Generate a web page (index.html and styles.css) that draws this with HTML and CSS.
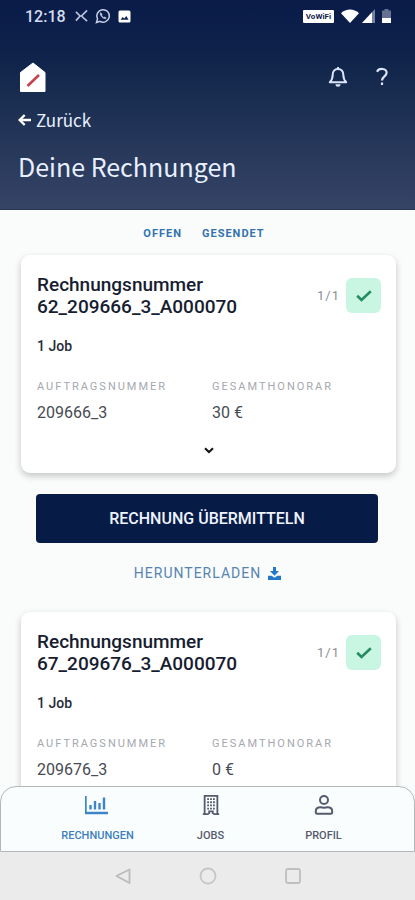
FILE: index.html
```html
<!DOCTYPE html>
<html lang="de">
<head>
<meta charset="utf-8">
<meta name="viewport" content="width=device-width, initial-scale=1">
<title>Deine Rechnungen</title>
<link rel="stylesheet" href="styles.css">
</head>
<body>
<header class="header">
  <div class="status">
    <div class="status-group">
      <span class="clock">12:18</span>
      <svg width="13" height="14" viewBox="0 0 14 14" fill="none" stroke="#b9c3de" stroke-width="1.800"><path d="M1 2.500 5.500 7 1 12M13 1 7 7l6 5.500M5.500 7h2"/></svg>
      <svg width="16" height="16" viewBox="0 0 16 16" fill="none" stroke="#c5cfe6" stroke-width="1.500"><path d="M1.500 14.500l1-3.600a6.300 6.300 0 1 1 2.400 2.500z"/><path d="M5.600 4.600c-1 1.200 0 3.300 1.500 4.700 1.500 1.300 3.200 2 4.200.8l-1.500-1.200-1 .7C7.700 9 7 8.200 6.600 7.200l.6-.9z" fill="#d5dcf0" stroke-width=".5"/></svg>
      <svg width="13" height="13" viewBox="0 0 13 13"><rect x=".5" y=".5" width="12" height="12" rx="1.500" fill="#fff"/><path d="M2.500 9.800 4.700 7l1.500 1.600L8.300 6l2.300 3.800z" fill="#14234d"/></svg>
    </div>
    <div class="status-group status-right">
      <span class="vowifi">VoWiFi</span>
      <svg width="18" height="14" viewBox="0 0 18 14"><path d="M0 4.200C5-.7 13-.7 18 4.200L9 14z" fill="#fff"/></svg>
      <svg class="signal" width="13" height="14" viewBox="0 0 13 14"><path d="M13 0v14H0z" fill="#7481a3"/><path d="M10 3.200V14H0z" fill="#fff"/></svg>
      <svg width="9" height="14" viewBox="0 0 9 14"><path d="M2.500 0h4v1.500H9V14H0V1.500h2.500z" fill="#65718f"/><path d="M0 9h9v5H0z" fill="#fff"/></svg>
    </div>
  </div>
  <div class="toolbar">
    <a href="#" class="icon-link" aria-label="Startseite"><svg width="28" height="30" viewBox="0 0 28 30"><path d="M15 1 27 10.500V29.500H2.500V10.500z" fill="#fff" stroke="#fff" stroke-linejoin="round"/><path d="M9.500 24 21 13" stroke="#c8414f" stroke-width="2.600"/></svg></a>
    <div class="actions">
      <button class="icon-btn" aria-label="Benachrichtigungen"><svg width="20" height="22" viewBox="0 0 20 22" fill="none" stroke="#dce5fb" stroke-width="2" stroke-linejoin="round"><path d="M10 1v2M10 3C6.500 3 4.700 5.600 4.700 8.700c0 4.100-1 5.600-2.900 7.600h16.400c-1.900-2-2.900-3.500-2.900-7.600C15.300 5.600 13.500 3 10 3z"/><path d="M7.500 18.200h5a2.500 2.500 0 0 1-5 0z" fill="#dce5fb" stroke="none"/></svg></button>
      <button class="icon-btn" aria-label="Hilfe"><svg width="14" height="20" viewBox="0 0 14 20" fill="none" stroke="#dce5fb" stroke-width="2.200"><path d="M2 4.700C3.800.8 11.600 1 11.600 5.800c0 3.700-4.600 3.600-4.600 7.800"/><path d="M7 15.500v2.500"/></svg></button>
    </div>
  </div>
  <a href="#" class="back"><svg width="13" height="12" viewBox="0 0 13 12" fill="none" stroke="#fff" stroke-width="2.400"><path d="M6.700 1 1.700 6l5 5M2 6h11"/></svg>Zurück</a>
  <h1>Deine Rechnungen</h1>
</header>

<main class="content">
  <nav class="tabs"><a href="#">OFFEN</a><a href="#">GESENDET</a></nav>
  <article class="card">
    <div class="card-head">
      <h2>Rechnungsnummer<br>62_209666_3_A000070</h2>
      <div class="progress">1/1<span class="check"><svg width="16" height="12" viewBox="0 0 16 12" fill="none" stroke="#268b63" stroke-width="2.600"><path d="M1.200 5.800 5.500 10 14.800 1.200"/></svg></span></div>
    </div>
    <p class="jobs">1 Job</p>
    <dl class="facts">
      <div><dt>AUFTRAGSNUMMER</dt><dd>209666_3</dd></div>
      <div><dt>GESAMTHONORAR</dt><dd>30 €</dd></div>
    </dl>
    <button class="expand" aria-label="Details anzeigen"><svg width="10" height="7" viewBox="0 0 10 7" fill="none" stroke="#111" stroke-width="2"><path d="M1 1.200 5 5l4-3.800"/></svg></button>
  </article>
  <button class="submit">RECHNUNG ÜBERMITTELN</button>
  <a href="#" class="download">HERUNTERLADEN <svg width="13" height="13" viewBox="0 0 13 13" fill="#2478cc"><path d="M5 0h3v4h3L6.500 8.700 2 4h3z"/><path d="M0 8.700h3.600l2.900 2 2.900-2H13V13H0z"/></svg></a>
  <article class="card">
    <div class="card-head">
      <h2>Rechnungsnummer<br>67_209676_3_A000070</h2>
      <div class="progress">1/1<span class="check"><svg width="16" height="12" viewBox="0 0 16 12" fill="none" stroke="#268b63" stroke-width="2.600"><path d="M1.200 5.800 5.500 10 14.800 1.200"/></svg></span></div>
    </div>
    <p class="jobs">1 Job</p>
    <dl class="facts">
      <div><dt>AUFTRAGSNUMMER</dt><dd>209676_3</dd></div>
      <div><dt>GESAMTHONORAR</dt><dd>0 €</dd></div>
    </dl>
    <button class="expand" aria-label="Details anzeigen"><svg width="10" height="7" viewBox="0 0 10 7" fill="none" stroke="#111" stroke-width="2"><path d="M1 1.200 5 5l4-3.800"/></svg></button>
  </article>
</main>

<nav class="bottom-nav">
  <a href="#" class="active"><svg width="26" height="20" viewBox="1 0 26 20" fill="none" stroke="#3a86c8" stroke-width="2"><path d="M1.500 1v17H24" stroke-width="2.400"/><path d="M6.500 10v4.500M11 6v8.500M15.500 8v6.500M20 2.500v12" stroke-width="2.400"/></svg>RECHNUNGEN</a>
  <a href="#"><svg width="20" height="20" viewBox="0 1 20 22" fill="none" stroke="#555b6c" stroke-width="2"><path d="M1 22h6.500M12.500 22H19M3 22V2h14v20M8 22v-3h4v3"/><path d="M6.800 4.500V17M10 4.500V17M13.200 4.500V17" stroke-dasharray="2 1.500"/></svg>JOBS</a>
  <a href="#"><svg width="20" height="20" viewBox="0 0 20 20" fill="none" stroke="#555b6c" stroke-width="2"><circle cx="10" cy="5" r="4"/><path d="M6.500 12.200c1.500.8 5.500.8 7 0 2.700 0 4.700 1.500 4.700 4v1.300a1.300 1.300 0 0 1-1.300 1.300H3.100a1.300 1.300 0 0 1-1.300-1.300v-1.300c0-2.500 2-4 4.700-4z"/></svg>PROFIL</a>
</nav>
<footer class="system-bar">
  <button aria-label="Zurück"><svg width="18" height="18" viewBox="0 0 18 18" fill="none" stroke="#bbb" stroke-width="1.800" stroke-linejoin="round"><path d="M15.500 2.500v13.500L2.500 9z"/></svg></button>
  <button aria-label="Home"><svg width="18" height="18" viewBox="0 0 18 18" fill="none" stroke="#c6c6c6" stroke-width="1.800"><circle cx="9" cy="9" r="7.500"/></svg></button>
  <button aria-label="Übersicht"><svg width="18" height="18" viewBox="0 0 18 18" fill="none" stroke="#bfbfbf" stroke-width="1.800"><rect x="2" y="2" width="14" height="14" rx="2"/></svg></button>
</footer>
</body>
</html>
```
FILE: styles.css
```css
* { box-sizing: border-box; }
body {
  margin: 0;
  height: 100vh;
  display: flex;
  flex-direction: column;
  overflow: hidden;
  background: #fafcfc;
  font-family: Roboto, sans-serif;
  color: #474b52;
}
h1, h2, p, dl, dd { margin: 0; }
a { text-decoration: none; color: inherit; }
button { border: 0; padding: 0; background: none; font: inherit; color: inherit; }
svg { display: block; flex: none; }

.header {
  flex: none;
  padding: 7px 24px 24px 18px;
  background: linear-gradient(#0a1b49 0%, #0d2149 22%, #1b2f52 50%, #364466 100%);
  border-bottom: 1px solid #283553;
  color: #e8f0ff;
}
.status { display: flex; justify-content: space-between; height: 18px; padding-left: 7px; }
.status-group { display: flex; align-items: center; gap: 7px; }
.clock { font-size: 16px; font-weight: 500; color: #d5dcf0; margin-right: 2px; }
.vowifi {
  padding: 0 3px;
  border-radius: 1px;
  background: #fff;
  color: #14234d;
  font-size: 8px;
  font-weight: 700;
  line-height: 13px;
}
.signal { margin-left: -4px; }

.toolbar { display: flex; justify-content: space-between; align-items: center; height: 30px; margin-top: 37px; }
.actions { display: flex; align-items: center; gap: 27px; padding-right: 2px; }
.back, h1 { font-family: "Noto Sans CJK SC", "Source Sans Pro", sans-serif; }
.back { display: flex; align-items: center; gap: 5px; margin-top: 16px; font-size: 17px; line-height: 24px; }
h1 { margin-top: 16px; padding-bottom: 1px; font-size: 25px; font-weight: 400; line-height: 36px; }

.content { flex: 1; min-height: 0; overflow: hidden; padding: 17px 19px 0 21px; }
.tabs {
  display: flex;
  justify-content: center;
  gap: 20px;
  margin-bottom: 14px;
  padding-right: 9px;
  color: #3272b0;
  font-size: 11px;
  font-weight: 700;
  letter-spacing: 1px;
  line-height: 14px;
}
.card {
  height: 218px;
  padding: 19px 15px 0 16px;
  border-radius: 9px;
  background: #fff;
  box-shadow: 0 3px 7px rgba(0, 0, 0, 0.22);
}
.card-head { display: flex; justify-content: space-between; }
h2 { font-size: 19px; font-weight: 500; line-height: 22px; color: #171d31; }
.progress { display: flex; align-items: center; gap: 6px; height: 43px; font-size: 13px; letter-spacing: 1px; color: #8b8e94; }
.check { display: flex; align-items: center; justify-content: center; width: 35px; height: 35px; border-radius: 6px; background: #c9f5e3; }
.jobs { margin-top: 20px; font-size: 14px; font-weight: 500; line-height: 16px; color: #252b39; }
.facts { display: grid; grid-template-columns: 1fr 1fr; gap: 6px; margin-top: 26px; }
dt { font-size: 11px; line-height: 14px; letter-spacing: 2px; color: #a5a8ae; }
dd { margin-top: 9px; font-size: 16px; line-height: 20px; }
.expand { display: block; margin: 24px auto 0; }
.submit {
  display: block;
  width: calc(100% - 33px);
  height: 49px;
  margin: 21px auto 0 15px;
  border-radius: 4px;
  background: #061b45;
  color: #eef3ff;
  font-size: 16px;
  font-weight: 500;
}
.download {
  display: flex;
  align-items: center;
  justify-content: center;
  gap: 7px;
  margin: 21px 0 30px;
  padding-right: 2px;
  color: #5684b0;
  font-size: 14px;
  line-height: 18px;
  letter-spacing: 1px;
}

.bottom-nav {
  flex: none;
  display: grid;
  grid-template-columns: 1fr 1fr 1fr;
  height: 66px;
  padding: 8px 34px 0 40px;
  border: 1px solid #b4b7ba;
  border-radius: 16px 16px 0 0;
  background: #fafdfe;
  color: #555b6c;
  font-size: 11px;
  font-weight: 500;
}
.bottom-nav a { display: flex; flex-direction: column; align-items: center; gap: 14px; line-height: 14px; }
.bottom-nav .active { color: #3d7fc0; }
.system-bar { flex: none; display: flex; justify-content: center; align-items: center; gap: 67px; height: 48px; background: #ebebeb; }
```
